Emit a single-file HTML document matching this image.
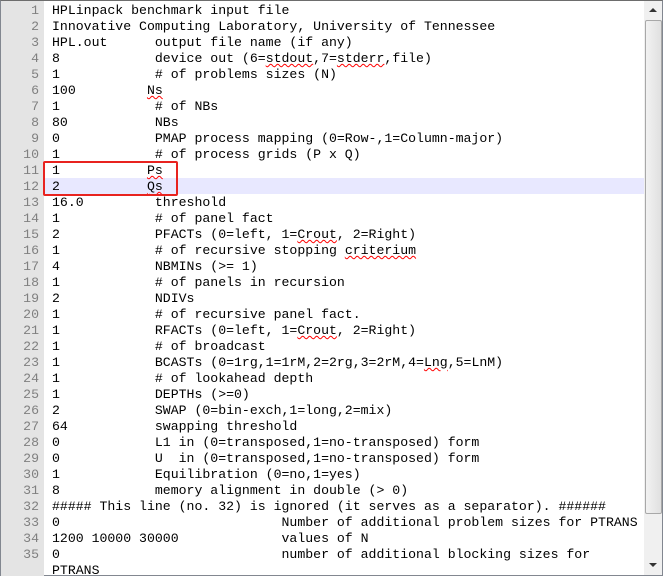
<!DOCTYPE html>
<html><head><style>
body{margin:0;width:663px;height:576px;overflow:hidden;background:#fff;position:relative;font-family:"Liberation Mono","Courier New",monospace;font-size:13.2px;}
#frame{position:absolute;left:0;top:0;width:661px;height:574px;border:1px solid #828790;border-top:1px solid #6d6d6d;}
#gut{position:absolute;left:1px;top:1px;width:43px;height:575px;background:#e4e4e4;}
.l{position:absolute;left:0;height:16px;line-height:16px;white-space:pre;}
.n{position:absolute;width:38px;text-align:right;color:#808080;left:1px}
.t{position:absolute;left:52px;color:#000}
#hl{position:absolute;left:44px;top:178px;width:600px;height:16px;background:#e8e8ff}
#box{position:absolute;left:43px;top:161px;width:131px;height:31px;border:2px solid #e8231f;border-radius:2px}
#sb{position:absolute;left:644px;top:1px;width:18px;height:574px;background:#f0f0f0}
#th{position:absolute;left:645px;top:20px;width:15px;height:492px;background:linear-gradient(90deg,#f2f2f2,#e0e0e0);border:1px solid #a8a8a8;border-radius:2px}
.w{text-decoration:underline wavy red;text-decoration-thickness:1px}
</style></head><body>
<div id="frame"></div><div id="gut"></div><div id="hl"></div>
<div id="sb"></div><div id="th"></div>
<div style="position:absolute;left:649px;top:8px;width:0;height:0;border-left:4px solid transparent;border-right:4px solid transparent;border-bottom:4px solid #333"></div>
<div style="position:absolute;left:649px;top:563px;width:0;height:0;border-left:4px solid transparent;border-right:4px solid transparent;border-top:4px solid #333"></div>
<div id="lines"></div>
<script>
var L=["HPLinpack benchmark input file","Innovative Computing Laboratory, University of Tennessee","HPL.out      output file name (if any)","8            device out (6=<u class=w>stdout</u>,7=<u class=w>stderr</u>,file)","1            # of problems sizes (N)","100         <u class=w>Ns</u>","1            # of NBs","80           NBs","0            PMAP process mapping (0=Row-,1=Column-major)","1            # of process grids (P x Q)","1           <u class=w>Ps</u>","2           <u class=w>Qs</u>","16.0         threshold","1            # of panel fact","2            PFACTs (0=left, 1=<u class=w>Crout</u>, 2=Right)","1            # of recursive stopping <u class=w>criterium</u>","4            NBMINs (>= 1)","1            # of panels in recursion","2            NDIVs","1            # of recursive panel fact.","1            RFACTs (0=left, 1=<u class=w>Crout</u>, 2=Right)","1            # of broadcast","1            BCASTs (0=1rg,1=1rM,2=2rg,3=2rM,4=<u class=w>Lng</u>,5=LnM)","1            # of lookahead depth","1            DEPTHs (>=0)","2            SWAP (0=bin-exch,1=long,2=mix)","64           swapping threshold","0            L1 in (0=transposed,1=no-transposed) form","0            U  in (0=transposed,1=no-transposed) form","1            Equilibration (0=no,1=yes)","8            memory alignment in double (> 0)","##### This line (no. 32) is ignored (it serves as a separator). ######","0                            Number of additional problem sizes for PTRANS","1200 10000 30000             values of N","0                            number of additional blocking sizes for","PTRANS"];
var h="";for(var i=0;i<L.length;i++){h+='<div class="l" style="top:'+(3+i*16)+'px;width:643px"><span class="n">'+(i<35?i+1:'')+'</span><span class="t">'+L[i]+'</span></div>';}
document.getElementById('lines').innerHTML=h;
</script>
<div id="box"></div>
</body></html>
